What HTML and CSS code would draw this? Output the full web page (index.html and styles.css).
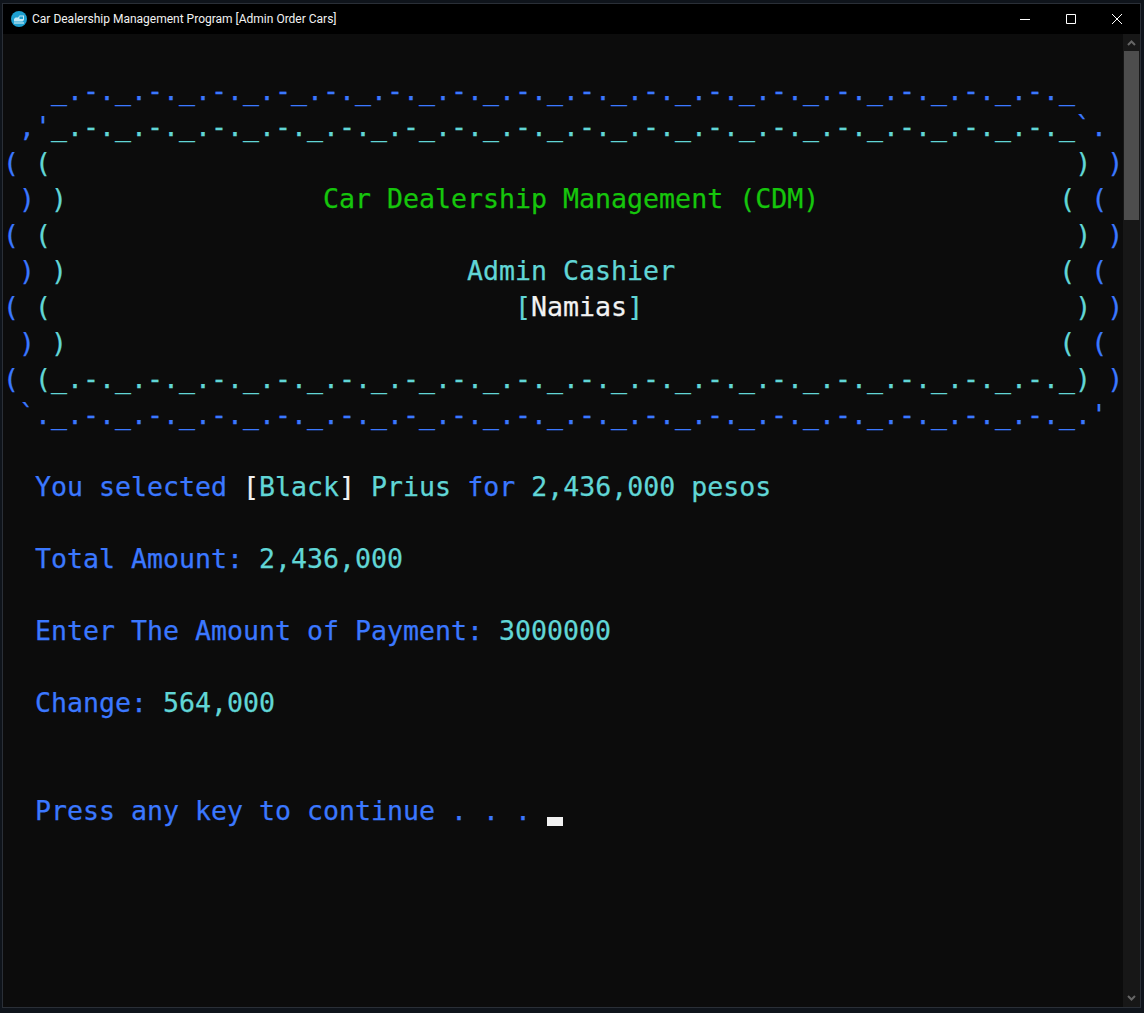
FILE: index.html
```html
<!DOCTYPE html>
<html lang="en">
<head>
<meta charset="utf-8">
<title>Car Dealership Management Program [Admin Order Cars]</title>
<link rel="stylesheet" href="styles.css">
</head>
<body>
<div class="window">
  <header class="titlebar">
    <svg class="app-icon" width="16" height="16" viewBox="0 0 16 16"><circle cx="8" cy="8" r="8" fill="#1d9fd0"/><path d="M3 10.5h8.5l1.5-1.5V4.5H8.5L7 6.5H4.5L3 8z" fill="#bfe8f5"/><path d="M8.5 5.5h3.5v2.5H8.5z" fill="#1d9fd0"/><path d="M3 11.5h10v1H3z" fill="#e6f6fb"/></svg>
    <span class="title">Car Dealership Management Program [Admin Order Cars]</span>
    <div class="controls">
      <span class="control"><svg width="10" height="10" viewBox="0 0 10 10"><path d="M0 5.5h10" stroke="#fff" fill="none"/></svg></span>
      <span class="control"><svg width="10" height="10" viewBox="0 0 10 10"><path d="M.5.5h9v9h-9z" stroke="#fff" fill="none"/></svg></span>
      <span class="control"><svg width="10" height="10" viewBox="0 0 10 10"><path d="M0 0l10 10M10 0L0 10" stroke="#fff" fill="none"/></svg></span>
    </div>
  </header>
  <main class="console">
<pre class="screen">

<span class="b">   _.-._.-._.-._.-_.-._.-._.-._.-._.-._.-._.-._.-._.-._.-._.-._.-._</span>
<span class="b"> ,'</span><span class="t">_.-._.-._.-._.-._.-._.-_.-._.-._.-._.-._.-._.-._.-._.-._.-._.-._</span><span class="b">`.</span>
<span class="b">(</span> <span class="t">(</span>                                                                <span class="t">)</span> <span class="b">)</span>
 <span class="b">)</span> <span class="t">)</span>                <span class="g">Car Dealership Management (CDM)</span>               <span class="t">(</span> <span class="b">(</span>
<span class="b">(</span> <span class="t">(</span>                                                                <span class="t">)</span> <span class="b">)</span>
 <span class="b">)</span> <span class="t">)</span>                         <span class="t">Admin Cashier</span>                        <span class="t">(</span> <span class="b">(</span>
<span class="b">(</span> <span class="t">(</span>                             <span class="t">[</span><span class="w">Namias</span><span class="t">]</span>                           <span class="t">)</span> <span class="b">)</span>
 <span class="b">)</span> <span class="t">)</span>                                                              <span class="t">(</span> <span class="b">(</span>
<span class="b">(</span> <span class="t">(_.-._.-._.-._.-._.-._.-_.-._.-._.-._.-._.-._.-._.-._.-._.-._.-._)</span> <span class="b">)</span>
<span class="b"> `._.-._.-._.-._.-._.-._.-_.-._.-._.-._.-._.-._.-._.-._.-._.-._.-._.'</span>

  <span class="b">You selected </span><span class="w">[</span><span class="t">Black</span><span class="w">]</span> <span class="t">Prius</span> <span class="b">for</span> <span class="t">2,436,000 pesos</span>

  <span class="b">Total Amount:</span> <span class="t">2,436,000</span>

  <span class="b">Enter The Amount of Payment:</span> <span class="t">3000000</span>

  <span class="b">Change:</span> <span class="t">564,000</span>


  <span class="b">Press any key to continue . . . </span><span class="cursor"></span>
</pre>
    <aside class="scrollbar">
      <span class="arrow"><svg width="9" height="7" viewBox="0 0 9 7"><path d="M1 6l3.5-3.5L8 6" stroke="#666" stroke-width="2" fill="none"/></svg></span>
      <span class="thumb"></span>
      <span class="track"></span>
      <span class="arrow"><svg width="9" height="7" viewBox="0 0 9 7"><path d="M1 1l3.5 3.5L8 1" stroke="#666" stroke-width="2" fill="none"/></svg></span>
    </aside>
  </main>
</div>
</body>
</html>
```
FILE: styles.css
```css
html, body { margin: 0; height: 100%; }
body {
  background: #0f141b;
  box-sizing: border-box;
  padding: 3px 3px 5px 2px;
  height: 1013px;
  overflow: hidden;
}
.window {
  box-sizing: border-box;
  height: 100%;
  border: 1px solid #2a2f37;
  display: flex;
  flex-direction: column;
  background: #0c0c0c;
}
.titlebar {
  height: 30px;
  flex: none;
  background: #000;
  display: flex;
  align-items: center;
  padding-left: 8px;
  color: #f2f2f2;
  font: 12px/30px Roboto, sans-serif;
}
.app-icon { margin-right: 5px; flex: none; }
.title { white-space: nowrap; }
.controls { margin-left: auto; display: flex; }
.control { width: 46px; height: 30px; display: flex; align-items: center; justify-content: center; }
.console { flex: 1; display: flex; min-height: 0; }
.screen {
  flex: 1;
  margin: 0;
  padding-top: 3px;
  overflow: hidden;
  font-family: "DejaVu Sans Mono", monospace;
  font-size: 26.58px;
  line-height: 36px;
  color: #cccccc;
  -webkit-text-stroke: 0.25px currentColor;
}
.b { color: #3b78ff; }
.t { color: #61d6d6; }
.g { color: #16c60c; }
.w { color: #f2f2f2; }
.cursor {
  display: inline-block;
  width: 16px;
  height: 9px;
  background: #f2f2f2;
  vertical-align: -6px;
}
.scrollbar {
  width: 17px;
  flex: none;
  background: #171717;
  display: flex;
  flex-direction: column;
  align-items: center;
}
.arrow { height: 17px; flex: none; display: flex; align-items: center; justify-content: center; }
.thumb { width: 15px; height: 169px; flex: none; background: #4d4d4d; }
.track { flex: 1; }
```
